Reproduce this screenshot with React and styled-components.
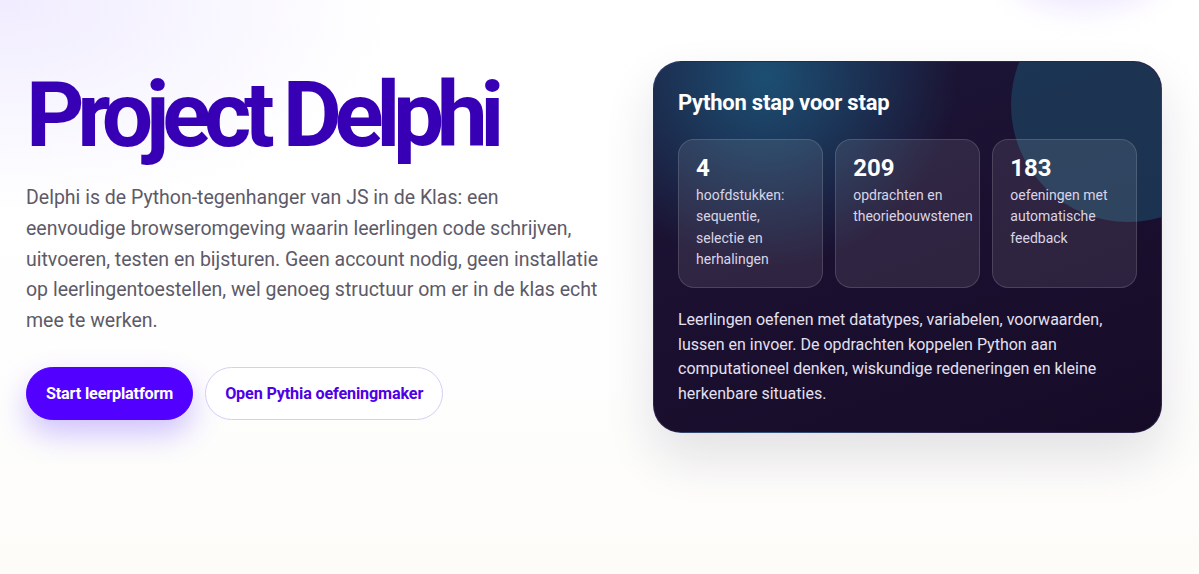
import React from "react";
import styled, { createGlobalStyle } from "styled-components";

const GlobalStyle = createGlobalStyle`
  * {
    box-sizing: border-box;
  }

  html,
  body {
    margin: 0;
    padding: 0;
  }

  body {
    font-family: Roboto, "Liberation Sans", Arial, sans-serif;
    background: #fdfcfb;
    -webkit-font-smoothing: antialiased;
  }
`;

const stats = [
  { value: "4", label: "hoofdstukken: sequentie, selectie en herhalingen" },
  { value: "209", label: "opdrachten en theoriebouwstenen" },
  { value: "183", label: "oefeningen met automatische feedback" },
];

const App = () => {
  return (
    <>
      <GlobalStyle />
      <Page>
        <Glow />
        <Hero>
          <Intro>
            <Title>Project Delphi</Title>
            <Lead>
              Delphi is de Python-tegenhanger van JS in de Klas: een
              <br />
              eenvoudige browseromgeving waarin leerlingen code schrijven,
              uitvoeren, testen en bijsturen. Geen account nodig, geen
              installatie op leerlingentoestellen, wel genoeg structuur om er in
              de klas echt mee te werken.
            </Lead>
            <Actions>
              <Button $primary>Start leerplatform</Button>
              <Button>Open Pythia oefeningmaker</Button>
            </Actions>
          </Intro>

          <Card>
            <Bubble />
            <CardTitle>Python stap voor stap</CardTitle>
            <StatGrid>
              {stats.map((stat) => (
                <Stat key={stat.value}>
                  <StatValue>{stat.value}</StatValue>
                  <StatLabel>{stat.label}</StatLabel>
                </Stat>
              ))}
            </StatGrid>
            <CardText>
              Leerlingen oefenen met datatypes, variabelen, voorwaarden, lussen
              en invoer. De opdrachten koppelen Python aan computationeel
              denken, wiskundige redeneringen en kleine herkenbare situaties.
            </CardText>
          </Card>
        </Hero>
      </Page>
    </>
  );
};

const Page = styled.div`
  position: relative;
  min-height: 574px;
  overflow: hidden;
  background:
    radial-gradient(ellipse 560px 300px at 0% 0%, rgba(238, 233, 255, 0.85), transparent 70%),
    linear-gradient(180deg, #ffffff 0%, #fefefe 60%, #fdfcf9 100%);
`;

const Glow = styled.div`
  position: absolute;
  top: -60px;
  left: 1010px;
  width: 150px;
  height: 70px;
  border-radius: 50%;
  background: rgba(225, 215, 255, 0.55);
  filter: blur(14px);
  pointer-events: none;
`;

const Hero = styled.section`
  position: relative;
  display: grid;
  grid-template-columns: 1fr 509px;
  column-gap: 40px;
  align-items: start;
  padding: 61px 37px 0 26px;
`;

const Intro = styled.div`
  display: flex;
  flex-direction: column;
`;

const Title = styled.h1`
  margin: 9px 0 0;
  font-size: 91px;
  line-height: 91px;
  font-weight: 700;
  letter-spacing: -0.081em;
  color: #3800b5;
`;

const Lead = styled.p`
  max-width: 585px;
  margin: 22px 0 0;
  font-size: 19.5px;
  line-height: 30.8px;
  color: #5d5a68;
`;

const Actions = styled.div`
  display: flex;
  gap: 12px;
  margin-top: 30px;
`;

const Button = styled.a`
  display: inline-flex;
  align-items: center;
  justify-content: center;
  height: 53px;
  padding: 0 19px;
  border-radius: 999px;
  font-size: 16.2px;
  font-weight: 700;
  letter-spacing: -0.01em;
  cursor: pointer;
  color: ${({ $primary }) => ($primary ? "#ffffff" : "#4f00e6")};
  background: ${({ $primary }) => ($primary ? "#5200ff" : "#ffffff")};
  border: 1px solid ${({ $primary }) => ($primary ? "#5200ff" : "#d6cdf6")};
  box-shadow: ${({ $primary }) =>
    $primary ? "0 14px 30px rgba(90, 40, 255, 0.28)" : "none"};
`;

const Card = styled.div`
  position: relative;
  overflow: hidden;
  border-radius: 28px;
  padding: 27px 24px 26px 24px;
  background:
    radial-gradient(circle 190px at 22% 4%, rgba(28, 82, 118, 0.95), transparent 100%),
    linear-gradient(160deg, #1c1839 0%, #1b1030 45%, #160b27 100%);
  box-shadow: 0 24px 50px rgba(30, 20, 60, 0.12);
  border: 1px solid rgba(120, 110, 170, 0.25);
`;

const Bubble = styled.div`
  position: absolute;
  top: -74px;
  left: 357px;
  width: 234px;
  height: 234px;
  border-radius: 50%;
  background: rgba(30, 80, 110, 0.55);
  pointer-events: none;
`;

const CardTitle = styled.h2`
  position: relative;
  margin: 0;
  font-size: 22px;
  line-height: 28px;
  font-weight: 700;
  color: #ffffff;
  letter-spacing: -0.01em;
`;

const StatGrid = styled.div`
  position: relative;
  display: grid;
  grid-template-columns: repeat(3, minmax(0, 1fr));
  gap: 12.5px;
  margin-top: 22px;
`;

const Stat = styled.div`
  min-height: 149px;
  padding: 13px 12px 14px 17px;
  border-radius: 16px;
  background: rgba(255, 255, 255, 0.09);
  border: 1px solid rgba(255, 255, 255, 0.14);
`;

const StatValue = styled.div`
  font-size: 24px;
  line-height: 30px;
  font-weight: 700;
  color: #ffffff;
`;

const StatLabel = styled.div`
  margin-top: 2px;
  font-size: 14px;
  line-height: 21.4px;
  color: #d9d5e6;
`;

const CardText = styled.p`
  position: relative;
  margin: 20px 0 0;
  font-size: 16px;
  line-height: 24.5px;
  color: #e4e0f0;
`;

export default App;
